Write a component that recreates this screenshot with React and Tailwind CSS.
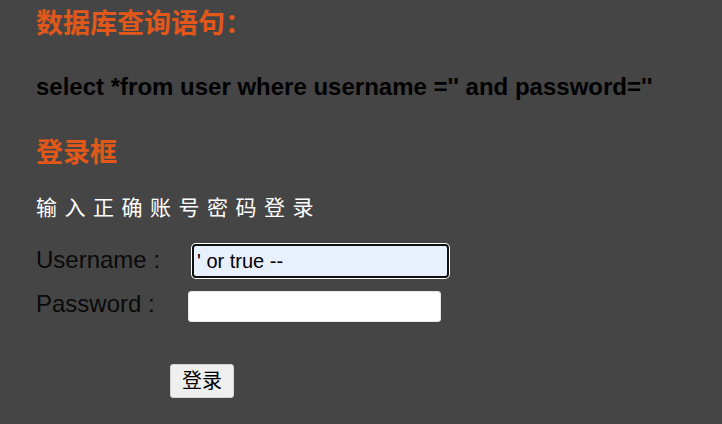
export default function App() {
  const font = "font-['Liberation_Sans','Noto_Sans_CJK_SC',sans-serif]";
  return (
    <div className={`min-h-[424px] w-full bg-[#454545] pl-9 pt-[8px] ${font}`}>
      <h2 className="text-[27px] leading-[32px] font-bold text-[#e2581a]">数据库查询语句：</h2>
      <p className="mt-[33px] text-[24px] leading-[28px] font-bold text-black whitespace-nowrap">
        select *from user where username ='' and password=''
      </p>
      <h2 className="mt-[36px] text-[27px] leading-[32px] font-bold text-[#e2581a]">登录框</h2>
      <p className="mt-[25px] text-[21px] leading-[28px] tracking-[7.5px] text-white">输入正确账号密码登录</p>
      <div className="mt-[21px] flex h-[36px] items-center">
        <label className="w-[156px] self-start mt-[3px] text-[24px] leading-[28px] text-[#0a0a0a]">Username :</label>
        <input
          readOnly
          value="' or true --"
          className="box-border h-[34px] w-[257px] rounded-[4px] border-2 border-[#101010] bg-[#e8f0fe] pl-[3px] text-[20px] text-black shadow-[0_0_0_1px_#ffffff] outline-none font-['Liberation_Sans',sans-serif]"
        />
      </div>
      <div className="mt-[12px] flex h-[31px] items-start">
        <label className="w-[152px] text-[24px] leading-[26px] text-[#0a0a0a]">Password :</label>
        <input
          type="password"
          readOnly
          className="box-border h-[31px] w-[253px] rounded-[3px] border border-[#e6e6e6] bg-white outline-none"
        />
      </div>
      <button className="ml-[134px] mt-[42px] box-border h-[34px] w-[64px] rounded-[3px] border border-[#d4d4d4] bg-[#efefef] text-[20px] leading-[24px] text-black">
        登录
      </button>
    </div>
  );
}
